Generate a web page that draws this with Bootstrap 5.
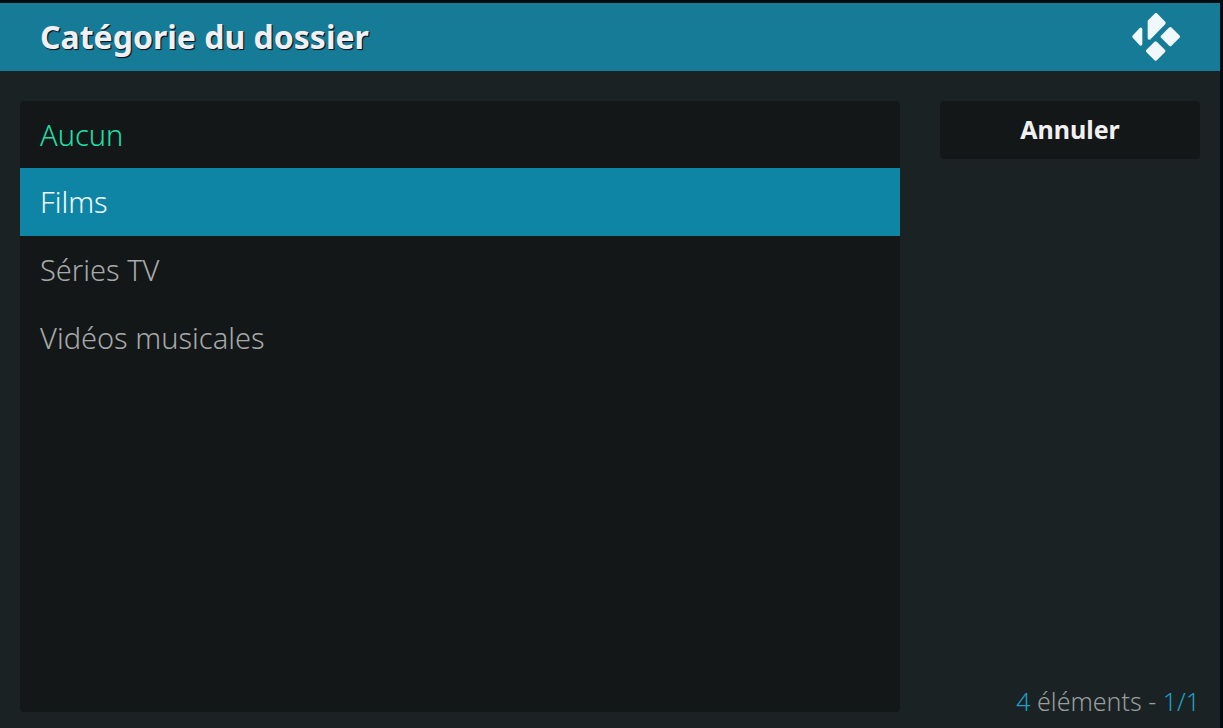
<!DOCTYPE html>
<html lang="fr">
<head>
<meta charset="utf-8">
<meta name="viewport" content="width=device-width, initial-scale=1">
<title>Catégorie du dossier</title>
<link href="https://cdn.jsdelivr.net/npm/bootstrap@5.3.0/dist/css/bootstrap.min.css" rel="stylesheet">
<style>
  body { background: #000c10; font-family: "Noto Sans", "Open Sans", sans-serif; padding: 3px 3px 0 0; }
  .dialog-box { background: #1b2224; }
  .dialog-head { background: #167b97; height: 68px; padding: 0 40px; }
  .dialog-head h1 { font-size: 32px; line-height: 44px; font-weight: 700; color: #f0f0f4; text-shadow: 1px 1px 1px #0b1a20, 1px 1px 0 #0b1a20; }
  .dialog-body { padding: 30px 20px 16px; gap: 40px; }
  .panel { background: #141718; border-radius: 4px; }
  .choices .list-group-item { background: transparent; border: 0; border-radius: 0; padding: 12px 20px; font-size: 29px; line-height: 44px; font-weight: 300; color: #a6a9aa; }
  .choices .list-group-item.chosen { color: #1fe0a8; }
  .choices .list-group-item.active { background: #0f85a5; color: #f0fafd; }
  .side { width: 260px; }
  .cancel, .cancel:hover { font-size: 25px; line-height: 34px; font-weight: 700; color: #f0f0f0; background: #141718; border: 0; border-radius: 4px; padding: 11px 12px 13px; }
  .tally { font-size: 25px; line-height: 22px; font-weight: 300; color: #989d9f; }
  .tally b { font-weight: 300; color: #1c9fc4; }
</style>
</head>
<body class="vh-100">
<main class="dialog-box d-flex flex-column h-100" role="dialog" aria-labelledby="heading">
  <header class="dialog-head d-flex align-items-center justify-content-between">
    <h1 id="heading" class="m-0">Catégorie du dossier</h1>
    <svg width="48" height="48" viewBox="0 0 144 144" fill="#f0f8fc" stroke="#f0f8fc" stroke-width="10" stroke-linejoin="round" role="img" aria-label="Kodi">
      <path d="M72 5 96 30 52 75V25Z"/>
      <path d="M6 71 26 49V93Z"/>
      <path d="M115 47 139 71 115 95 91 71Z"/>
      <path d="M71 90 95 114 71 138 47 114Z"/>
    </svg>
  </header>
  <div class="dialog-body d-flex flex-grow-1">
    <div class="panel choices list-group flex-grow-1">
      <button type="button" class="list-group-item list-group-item-action chosen">Aucun</button>
      <button type="button" class="list-group-item list-group-item-action active" aria-current="true">Films</button>
      <button type="button" class="list-group-item list-group-item-action">Séries TV</button>
      <button type="button" class="list-group-item list-group-item-action">Vidéos musicales</button>
    </div>
    <aside class="side d-flex flex-column justify-content-between flex-shrink-0">
      <button type="button" class="btn cancel w-100">Annuler</button>
      <p class="tally m-0 text-end"><b>4</b> éléments - <b>1/1</b></p>
    </aside>
  </div>
</main>
<script src="https://cdn.jsdelivr.net/npm/bootstrap@5.3.0/dist/js/bootstrap.bundle.min.js"></script>
</body>
</html>
